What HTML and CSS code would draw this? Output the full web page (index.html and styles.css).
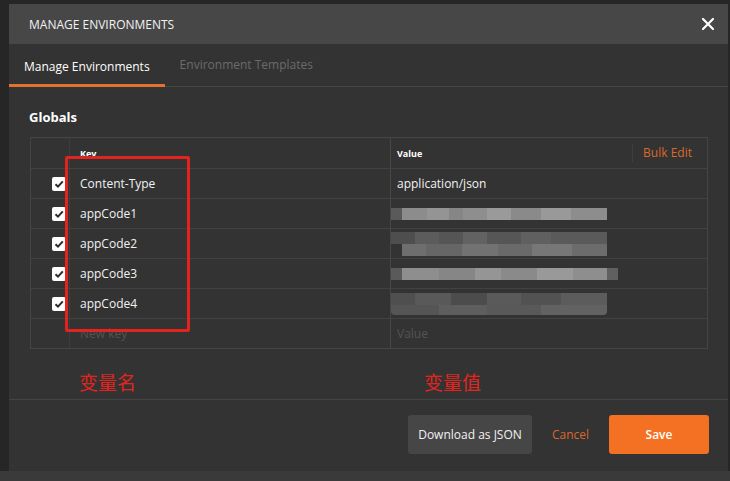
FILE: index.html
```html
<!DOCTYPE html>
<html>
<head>
<meta charset="utf-8">
<link rel="stylesheet" href="styles.css">
</head>
<body>
<div class="backdrop">
  <div class="modal">
    <div class="modal-header">
      <span class="modal-title">MANAGE ENVIRONMENTS</span>
      <svg class="close" width="14" height="14" viewBox="0 0 14 14"><path d="M2 2 L12 12 M12 2 L2 12" stroke="#fff" stroke-width="2.2" stroke-linecap="round"/></svg>
    </div>
    <div class="tabs">
      <div class="tab active">Manage Environments</div>
      <div class="tab">Environment Templates</div>
    </div>
    <div class="content">
      <div class="section-title">Globals</div>
      <div class="table">
        <div class="row head">
          <div class="cell chk"></div>
          <div class="cell key">Key</div>
          <div class="cell val"><span>Value</span><span class="bulk">Bulk Edit</span></div>
        </div>
        <div class="row">
          <div class="cell chk"><span class="checkbox"><svg width="14" height="14" viewBox="0 0 14 14"><path d="M3.5 7.2 L6 9.6 L10.8 4.4" fill="none" stroke="#2b2b2b" stroke-width="2"/></svg></span></div>
          <div class="cell key">Content-Type</div>
          <div class="cell val">application/json</div>
        </div>
        <div class="row">
          <div class="cell chk"><span class="checkbox"><svg width="14" height="14" viewBox="0 0 14 14"><path d="M3.5 7.2 L6 9.6 L10.8 4.4" fill="none" stroke="#2b2b2b" stroke-width="2"/></svg></span></div>
          <div class="cell key">appCode1</div>
          <div class="cell val"><div class="mask"><div class="blur b1"></div></div></div>
        </div>
        <div class="row">
          <div class="cell chk"><span class="checkbox"><svg width="14" height="14" viewBox="0 0 14 14"><path d="M3.5 7.2 L6 9.6 L10.8 4.4" fill="none" stroke="#2b2b2b" stroke-width="2"/></svg></span></div>
          <div class="cell key">appCode2</div>
          <div class="cell val"><div class="mask"><div class="blur b2a"></div><div class="blur b2b"></div></div></div>
        </div>
        <div class="row">
          <div class="cell chk"><span class="checkbox"><svg width="14" height="14" viewBox="0 0 14 14"><path d="M3.5 7.2 L6 9.6 L10.8 4.4" fill="none" stroke="#2b2b2b" stroke-width="2"/></svg></span></div>
          <div class="cell key">appCode3</div>
          <div class="cell val"><div class="mask"><div class="blur b3"></div></div></div>
        </div>
        <div class="row">
          <div class="cell chk"><span class="checkbox"><svg width="14" height="14" viewBox="0 0 14 14"><path d="M3.5 7.2 L6 9.6 L10.8 4.4" fill="none" stroke="#2b2b2b" stroke-width="2"/></svg></span></div>
          <div class="cell key">appCode4</div>
          <div class="cell val"><div class="mask"><div class="blur b4a"></div><div class="blur b4b"></div></div></div>
        </div>
        <div class="row last">
          <div class="cell chk"></div>
          <div class="cell key placeholder">New key</div>
          <div class="cell val placeholder">Value</div>
        </div>
        <div class="annot-box"></div>
      </div>
      <div class="labels">
        <span class="label-name">变量名</span>
        <span class="label-value">变量值</span>
      </div>
    </div>
    <div class="footer">
      <button class="btn btn-dark">Download as JSON</button>
      <button class="btn btn-link">Cancel</button>
      <button class="btn btn-primary">Save</button>
    </div>
  </div>
</div>
</body>
</html>
```

FILE: styles.css
```css
* { box-sizing: border-box; }
html, body {
  margin: 0;
  padding: 0;
  height: 100%;
  overflow: hidden;
}
body {
  background: #3a3a3a;
  font-family: "Open Sans", "Noto Sans", sans-serif;
  color: #fff;
}
.backdrop {
  background: linear-gradient(#262626, #262626) no-repeat;
  background-size: 100% 471px;
  padding: 4px 2px 0 9px;
  height: 481px;
}
.modal {
  width: 719px;
  height: 467px;
  background: #333333;
  display: flex;
  flex-direction: column;
}
.modal-header {
  height: 40px;
  background: #474747;
  display: flex;
  align-items: center;
  justify-content: space-between;
  padding: 0 13px 0 20px;
}
.modal-title {
  font-size: 12px;
  color: #f2f2f2;
}
.close { display: block; }
.tabs {
  height: 43px;
  border-bottom: 1px solid #464646;
  display: flex;
}
.tab {
  padding: 0 15px;
  font-size: 12px;
  line-height: 42px;
  color: #6b6b6b;
}
.tab.active {
  color: #fff;
  border-bottom: 3px solid #e2732f;
  line-height: 39px;
  margin-bottom: -1px;
  padding-top: 3px;
}
.content {
  flex: 1;
  padding: 0 20px 0 21px;
}
.section-title {
  font-size: 13px;
  font-weight: 700;
  margin: 21px 0 0 -1px;
  line-height: 18px;
}
.table {
  position: relative;
  margin-top: 11px;
  width: 678px;
  border: 1px solid #454545;
}
.row {
  display: grid;
  grid-template-columns: 38px 321px 1fr;
  height: 30px;
  border-bottom: 1px solid #424242;
}
.row.head { height: 31px; }
.row.last { border-bottom: none; height: 29px; }
.cell {
  display: flex;
  align-items: center;
  font-size: 12px;
  color: #f2f2f2;
}
.cell.key {
  border-left: 1px solid #3d3d3d;
  padding-left: 10px;
}
.cell.val {
  border-left: 1px solid #474747;
  padding-left: 6px;
}
.row.head .cell {
  font-size: 9px;
  font-weight: 700;
  color: #fff;
}
.row.head .cell.val {
  justify-content: space-between;
}
.bulk {
  font-size: 12px;
  font-weight: 400;
  color: #d9692b;
  border-left: 1px solid #3e3e3e;
  height: 18px;
  line-height: 18px;
  padding: 0 15px 0 10px;
}
.chk {
  justify-content: flex-end;
  padding-right: 3px;
}
.checkbox {
  width: 14px;
  height: 14px;
  background: #fff;
  border-radius: 2px;
  display: block;
}
.checkbox svg { display: block; }
.placeholder.cell { color: #545454; }
.mask {
  margin-left: -6px;
  display: flex;
  flex-direction: column;
}
.blur { height: 12px; }
.b1 {
  width: 216px;
  background: linear-gradient(90deg, #5a5a5a 0 11px, #8c8c8c 11px 36px, #949494 36px 58px, #868686 58px 72px, #8e8e8e 72px 96px, #9a9a9a 96px 120px, #8a8a8a 120px 150px, #999 150px 180px, #8d8d8d 180px 216px);
}
.b2a {
  width: 216px;
  background: linear-gradient(90deg, #4e4e4e 0 24px, #5c5c5c 24px 48px, #555 48px 72px, #626262 72px 96px, #565656 96px 130px, #606060 130px 160px, #5a5a5a 160px 216px);
}
.b2b {
  width: 205px;
  margin-left: 11px;
  background: linear-gradient(90deg, #6e6e6e 0 24px, #666 24px 60px, #727272 60px 96px, #6a6a6a 96px 130px, #777 130px 170px, #6c6c6c 170px 205px);
}
.b3 {
  width: 227px;
  background: linear-gradient(90deg, #5a5a5a 0 11px, #8e8e8e 11px 48px, #868686 48px 84px, #959595 84px 110px, #8a8a8a 110px 146px, #999 146px 182px, #8e8e8e 182px 216px, #606060 216px 227px);
}
.b4a {
  width: 216px;
  background: linear-gradient(90deg, #4f4f4f 0 24px, #595959 24px 60px, #4c4c4c 60px 96px, #5a5a5a 96px 130px, #525252 130px 170px, #5c5c5c 170px 216px);
}
.b4b {
  width: 216px;
  height: 10px;
  border-radius: 0 0 4px 4px;
  background: linear-gradient(90deg, #555 0 48px, #5e5e5e 48px 96px, #595959 96px 150px, #626262 150px 216px);
}
.annot-box {
  position: absolute;
  left: 34px;
  top: 18px;
  width: 125px;
  height: 176px;
  border: 3px solid #e3231e;
  border-radius: 2px;
}
.labels {
  margin-top: 20px;
  height: 26px;
  display: flex;
  font-family: "Noto Sans CJK SC", sans-serif;
  font-size: 19px;
  line-height: 26px;
  color: #e3251d;
}
.label-name { margin-left: 49px; }
.label-value { margin-left: 288px; }
.footer {
  border-top: 1px solid #444;
  margin-top: 2px;
  height: 72px;
  display: flex;
  justify-content: flex-end;
  align-items: flex-start;
  padding: 15px 19px 0 0;
}
.btn {
  font-family: "Open Sans", sans-serif;
  font-size: 12px;
  border: none;
  height: 39px;
  border-radius: 3px;
  cursor: pointer;
}
.btn-dark {
  background: #464646;
  color: #f2f2f2;
  width: 124px;
}
.btn-link {
  background: transparent;
  color: #d9692b;
  padding: 0;
  margin-left: 20px;
  width: 37px;
}
.btn-primary {
  background: #f47023;
  color: #fff;
  width: 100px;
  margin-left: 20px;
  font-weight: 600;
}
```
